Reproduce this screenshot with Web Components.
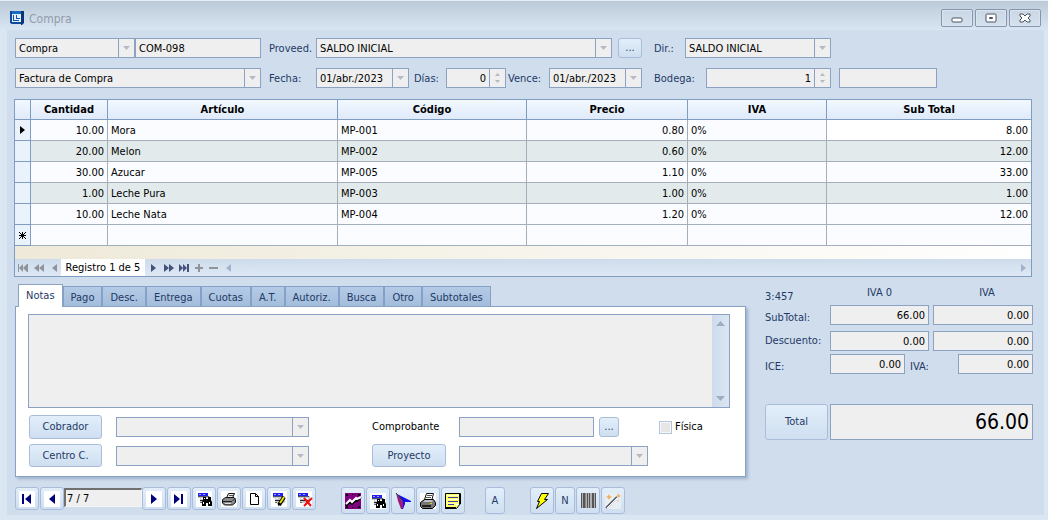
<!DOCTYPE html>
<html lang="es">
<head>
<meta charset="utf-8">
<title>Compra</title>
<style>
html, body { margin: 0; height: 100%; }
body {
  font: 11px/14px "DejaVu Sans Condensed", "DejaVu Sans", sans-serif;
  color: #1f3a66;
  --line: #8ba2c3;
  --field: #efefef;
  --face: #d0dded;
}
</style>
</head>
<body>
<purchase-window></purchase-window>
<script>
const BASE = `
  *, *::before, *::after { box-sizing: border-box; }
  :host([hidden]) { display: none; }
  input, select, textarea, button { font: inherit; margin: 0; border-radius: 0; }
  svg { display: block; flex: none; }
`;

function define(name, render) {
  customElements.define(name, class extends HTMLElement {
    connectedCallback() {
      if (this.shadowRoot) return;
      const t = document.createElement('template');
      t.innerHTML = render(this);
      this.attachShadow({ mode: 'open' }).append(t.content.cloneNode(true));
    }
  });
}

const svg = (w, h, body) => `<svg width="${w}" height="${h}" viewBox="0 0 ${w} ${h}" aria-hidden="true">${body}</svg>`;
const sheet = `<path fill="#fff" d="M1 1h16v16H1z"/>`;
const form = `<path fill="#c4c8d0" d="M3 6h12v7H5V8H3z"/><path fill="#2020f0" d="M3 3h10v3H3z"/><path fill="#a0a0e8" d="M4 4h2v1H4zM8 4h2v1H8z"/><path fill="#55556a" d="M3 6h11v1H3z"/><path fill="#fff" d="M6 8h2v1H6zM10 8h3v1h-3z"/><path fill="#222" d="M5 10h9v1H5z"/><path fill="#666" d="M5 12h2v1H5z"/>`;
const bino = `<path fill="#000" d="M8 7h3v2h2V7h3v3l1 2v4h-4v-3h-2v3H7v-4l1-2z"/><path fill="#fff" d="M9 8h1v1H9zM8 12h1v2H8zM14 12h1v2h-1z"/>`;
const ICONS = {
  first: svg(18, 18, sheet + `<path fill="#00007c" d="M4 4h2v10H4zM13 4v10L7 9z"/>`),
  prev: svg(18, 18, sheet + `<path fill="#00007c" d="M12 4v10L6 9z"/>`),
  next: svg(18, 18, sheet + `<path fill="#00007c" d="M6 4v10l6-5z"/>`),
  last: svg(18, 18, sheet + `<path fill="#00007c" d="M4 4v10l6-5zM11 4h2v10h-2z"/>`),
  find: svg(18, 18, sheet + form + bino),
  print: svg(18, 18, sheet + `<path fill="#eee" stroke="#111" d="M6.500 8l2-4.500h6l-2 4.500"/><path stroke="#555" d="M9 5.500h4M8 7.500h4"/><path fill="#8a8a8a" stroke="#111" d="M2.500 9.500l3-2h8.500l1.500 2v3l-3 2.500H4.500l-2-2z"/><path stroke="#222" d="M3 11.500h9M12.500 11l3-3"/><path fill="#ddd" d="M5 13h6v1H5z"/>`),
  page: svg(18, 18, sheet + `<path fill="#fff" stroke="#000" d="M5.500 3.500h5l3 3v8h-8zM10.500 3.500v3h3"/>`),
  edit: svg(18, 18, sheet + form + `<path stroke="#000" stroke-width="4" d="M9 15l5-8"/><path stroke="#e8e000" stroke-width="2" d="M10 13l4-6"/><path fill="#000" d="M8 16v-3l2 2z"/>`),
  remove: svg(18, 18, sheet + form + `<path stroke="#f01010" stroke-width="2" d="M9 8l7 8M17 8l-8 8"/>`),
  chart: svg(18, 18, `<path fill="#800080" d="M1 1h16v16H1z"/><path fill="#000" d="M2 2h2v2H2zM14 2h2v2h-2zM2 14h2v2H2zM14 14h2v2h-2zM8 2h1v1H8zM8 15h1v1H8z"/><path fill="none" stroke="#000" stroke-width="2" d="M2 14l4-4 2 2 4-4 1 1 4-4"/><path fill="none" stroke="#fff" stroke-width="2" d="M2 12l4-4 2 2 4-4 1 1 4-2"/>`),
  arrow: svg(18, 18, `<path fill="#a01878" d="M2 1l6 8v8H7L4 9z"/><path fill="#1010f0" d="M3 2l14 7v1h-6v2l-2 5H8V9z"/><path fill="#a01878" d="M8 9h1v7H8z"/><path fill="none" stroke="#333" d="M2 1l7 8"/>`),
  printer: svg(18, 18, sheet + `<path fill="#fff" stroke="#111" d="M5.500 7.500l2-6h7l-1.500 6"/><path stroke="#555" d="M8 3.500h5M7 5.500h5"/><path fill="#777" stroke="#000" d="M1.500 10.500l4-3h9l2 3v3l-3 3H3.500l-2-2z"/><path fill="#c0c0c0" d="M4 10h9l1-2H6z"/><path fill="#222" d="M3 13h9v2H3z"/><path fill="#d8d800" d="M11 11h2v1h-2z"/>`),
  note: svg(18, 18, `<path fill="#ffff66" stroke="#000" d="M1.500 1.500h15v10l-4 5h-11z"/><path fill="#ffffc8" d="M3 3h12v1H3zM3 7h12v1H3zM3 11h8v1H3z"/><path fill="#000" d="M1 15h11v2H1zM15 2h2v10h-2z"/><path fill="#fff" d="M12 12h3l-3 3z"/><path stroke="#3c3ca0" d="M4 5.500h10M4 9.500h10M4 12.500h6"/>`),
  bolt: svg(18, 18, `<path fill="#ffff00" stroke="#000" d="M8.500 1.500h7L11.500 7.500h3L3.500 16.500l3-7H4.500z"/>`),
  barcode: svg(18, 18, `<path fill="#b0b0b0" d="M2 1h15v15H2z"/><path fill="#555" d="M2 1h1v15H2zM4 1h2v15H4zM8 1h1v15H8zM10 1h1v15h-1zM13 1h2v15h-2zM16 1h1v15h-1z"/><path fill="#888" d="M6 1h1v15H6z"/>`),
  wand: svg(18, 18, `<path fill="#e9eef5" d="M1 1h16v16H1z"/><path stroke="#555a60" stroke-width="2" d="M2 16L13 5"/><path stroke="#fff" d="M3 16L14 5"/><path fill="#f0b060" d="M5 2l1 2 2 1-2 1-1 2-1-2-2-1 2-1zM14 1l1 2 2 1-2 1-1 1-1-2zM13 8l2 1-1 1z"/>`)
};

const down = svg(7, 4, `<path fill="#b4bac6" d="M0 0h7L3.500 4z"/>`);
const tinyUp = svg(5, 3, `<path fill="#b4b8c0" d="M0 3h5L2.500 0z"/>`);
const tinyDown = svg(5, 3, `<path fill="#b4b8c0" d="M0 0h5L2.500 3z"/>`);

/* Labelled field. kind: text | select | date | spin */
define('form-field', el => {
  const kind = el.getAttribute('kind') || 'text';
  const value = el.getAttribute('value') || '';
  const label = el.getAttribute('label');
  const name = el.getAttribute('name') || '';
  const aria = label ? '' : `aria-label="${name}"`;
  const control = kind === 'select'
    ? `<select id="c" ${aria}><option>${value}</option></select><span class="end">${down}</span>`
    : `<input id="c" type="text" ${aria} value="${value}" readonly>` +
      (kind === 'date' ? `<button class="end" type="button" aria-label="Abrir calendario">${down}</button>` : '') +
      (kind === 'spin' ? `<span class="end stack"><button type="button" aria-label="Subir">${tinyUp}</button><button type="button" aria-label="Bajar">${tinyDown}</button></span>` : '');
  return `<style>${BASE}
    :host { display: flex; align-items: center; min-width: 0; color: #1f3a66; }
    label { flex: none; width: var(--label-width, auto); padding-top: var(--label-drop, 2px); text-align: left; white-space: nowrap; }
    .box { flex: 1; min-width: 0; height: var(--box-height, 20px); display: flex; border: 1px solid var(--line); background: var(--field); }
    input, select { flex: 1; min-width: 0; width: 0; border: 0; outline: 0; padding: 0 3px; background: none; color: #000; appearance: none; text-align: inherit; height: 100%; }
    select { padding-top: 1px; }
    .end { flex: none; width: 16px; padding: 0; border: 0; border-left: 1px solid var(--line); background: none; display: flex; align-items: center; justify-content: center; pointer-events: none; }
    .stack { flex-direction: column; justify-content: space-evenly; }
    .stack button { border: 0; padding: 0; background: none; }
  </style>${label ? `<label for="c">${label}</label>` : ''}<div class="box">${control}</div>`;
});

define('push-button', el => {
  const icon = el.getAttribute('icon');
  const name = el.getAttribute('name');
  return `<style>${BASE}
    :host { display: flex; }
    button { flex: 1; min-width: 0; padding: 0; border: 1px solid #a9bcdb; border-radius: 3px; color: inherit;
      background: linear-gradient(#e2eefa, #cfdff0); display: flex; align-items: center; justify-content: center; }
  </style><button type="button" ${name ? `aria-label="${name}"` : ''}>${icon ? ICONS[icon] : '<slot></slot>'}</button>`;
});

define('title-bar', () => `<style>${BASE}
    :host { display: flex; align-items: center; height: 30px; padding: 4px 7px 0 9px; gap: 5px;
      border-top: 1px solid #e4edf5; background: linear-gradient(#bccad8, #d8e5f2); }
    h1 { flex: 1; margin: 0; font-size: 12px; line-height: 16px; font-weight: normal; color: #929caa; padding-top: 2px; }
    .keys { display: flex; gap: 2px; }
    button { width: 32px; height: 18px; padding: 0; border: 1px solid #8796ae; border-radius: 2px; background: linear-gradient(#c9d6e4, #d5e1ed);
      display: flex; align-items: center; justify-content: center; box-shadow: inset 0 0 0 1px #dbe5ef; }
  </style>
  ${svg(15, 15, `<path fill="#1a6cc0" d="M1 1h14v3H1z"/><path fill="#0a3478" d="M12 1h3v12l-2 2h-1z"/><path fill="#0d4a9c" d="M1 1h2v11h9v2H3l-2-1z"/><path fill="#e4eef8" d="M3 4h9v8H3z"/><path fill="#1459a8" d="M4 5h1v5h5v1H4zM7 5h1v3h3v1H7z"/>`)}
  <h1>Compra</h1>
  <div class="keys">
    <button type="button" aria-label="Minimizar">${svg(12, 10, '<rect x="1" y="5" width="10" height="4" rx="1" fill="#fff" stroke="#4b5566"/>')}</button>
    <button type="button" aria-label="Maximizar">${svg(12, 10, '<rect x="1" y="1" width="10" height="8" rx="1" fill="#fff" stroke="#4b5566"/><path fill="#c8d4e2" stroke="#4b5566" d="M4.500 4.500h3v1h-3z"/>')}</button>
    <button type="button" aria-label="Cerrar">${svg(12, 10, '<path fill="#fff" stroke="#4b5566" d="M1 1h3l2 2 2-2h3v2L9 5l2 2v2H8L6 7 4 9H1V7l2-2-2-2z"/>')}</button>
  </div>`);

define('purchase-header', () => `<style>${BASE}
    :host { display: grid; grid-template-columns: 246fr 373fr 382fr; gap: 10px 8px; padding: 8px 0 0 1px; }
    .g { display: flex; min-width: 0; align-items: center; }
    .c { padding-left: 4px; }
    .grow { flex: 1; }
    .type { flex: 120; } .num { flex: 126; }
    .lab { --label-width: 47px; }
    .more { width: 24px; height: 20px; margin-left: 6px; }
    .date { width: 140px; }
    .due { width: 134px; --label-width: 41px; margin-left: auto; }
    .days { width: 92px; --label-width: 32px; margin-left: 5px; text-align: right; }
    .dir { width: 177px; --label-width: 31px; }
    .store { width: 177px; --label-width: 52px; text-align: right; }
    .extra { width: 98px; margin-left: 8px; }
  </style>
  <div class="g"><form-field class="type" kind="select" value="Compra" name="Documento"></form-field><form-field class="num" value="COM-098" name="Número"></form-field></div>
  <div class="g"><form-field class="grow lab" kind="select" label="Proveed." value="SALDO INICIAL"></form-field><push-button class="more">...</push-button></div>
  <div class="g c"><form-field class="dir" kind="select" label="Dir.:" value="SALDO INICIAL"></form-field></div>
  <div class="g"><form-field class="grow" kind="select" value="Factura de Compra" name="Tipo"></form-field></div>
  <div class="g"><form-field class="date lab" kind="date" label="Fecha:" value="01/abr./2023"></form-field><form-field class="days" kind="spin" label="Días:" value="0"></form-field><form-field class="due" kind="date" label="Vence:" value="01/abr./2023"></form-field></div>
  <div class="g c"><form-field class="store" kind="spin" label="Bodega:" value="1"></form-field><form-field class="extra" name="Nombre de bodega"></form-field></div>`);

const ROWS = [
  ['10.00', 'Mora', 'MP-001', '0.80', '0%', '8.00'],
  ['20.00', 'Melon', 'MP-002', '0.60', '0%', '12.00'],
  ['30.00', 'Azucar', 'MP-005', '1.10', '0%', '33.00'],
  ['1.00', 'Leche Pura', 'MP-003', '1.00', '0%', '1.00'],
  ['10.00', 'Leche Nata', 'MP-004', '1.20', '0%', '12.00'],
  ['', '', '', '', '', '']
];
const marker = i => i === 0 ? svg(5, 8, '<path fill="#000" d="M0 0l5 4-5 4z"/>')
  : i === 5 ? svg(7, 7, '<path stroke="#000" d="M0 0l7 7M7 0L0 7M3.500 0v7M0 3.500h7"/>') : '';

define('detail-grid', () => `<style>${BASE}
    :host { display: block; border: 1px solid #7f9dc0; color: #000; }
    table { width: 100%; table-layout: fixed; border-collapse: separate; border-spacing: 0; }
    th, td { padding: 0 3px; border: 0 solid #a3b0bc; border-width: 0 1px 1px 0; overflow: hidden; white-space: nowrap; }
    th:last-child, td:last-child { border-right: 0; }
    thead th { height: 20px; border-color: #7f9dc0; background: linear-gradient(#f2f8fe, #dfeafa); font-weight: bold; }
    td, tbody th { height: 21px; background: #fafcff; }
    td { padding-top: 2px; }
    tbody tr:nth-child(even) td { background: #e2eaeb; }
    tbody tr:last-child td { background: #fafcff; }
    tbody tr:first-child td:last-child { background: #fff; }
    tbody th { background: #eaf2fc; border-color: #7f9dc0; }
    tbody th svg { margin: auto; }
    .r { text-align: right; }
    .filler { height: 13px; background: linear-gradient(90deg, #eee9d8, #fff); }
  </style>
  <table>
    <colgroup><col style="width:16px"><col style="width:77px"><col style="width:230px"><col style="width:189px"><col style="width:161px"><col style="width:139px"><col></colgroup>
    <thead><tr><th></th><th>Cantidad</th><th>Artículo</th><th>Código</th><th>Precio</th><th>IVA</th><th>Sub Total</th></tr></thead>
    <tbody>${ROWS.map((r, i) => `<tr><th>${marker(i)}</th>${r.map((c, k) => `<td${[0, 3, 5].includes(k) ? ' class="r"' : ''}>${c}</td>`).join('')}</tr>`).join('')}</tbody>
  </table>
  <div class="filler"></div>
  <record-nav></record-nav>`);

const L = 'l-5 4 5 4z', R = 'l5 4-5 4z';
const nav = (color, body, w = 10) => svg(w, 8, `<g fill="${color}">${body}</g>`);
define('record-nav', () => `<style>${BASE}
    :host { display: flex; height: 17px; background: linear-gradient(#cddbeb, #dee9f4); }
    .n { display: flex; align-items: center; }
    button { width: 15px; height: 17px; padding: 0; border: 0; background: none; display: flex; align-items: center; justify-content: center; }
    .n button:first-child { width: 16px; }
    output { width: 84px; padding-top: 2px; background: #fff; text-align: center; white-space: nowrap; }
    .bar { flex: 1; display: flex; justify-content: space-between; }
  </style>
  <div class="n">
    <button type="button" aria-label="Primero">${nav('#8f949c', `<path d="M0 0h1v8H0z"/><path d="M5 0l-4 4 4 4z"/><path d="M9 0l-4 4 4 4zM9 0h1v8H9z"/>`)}</button>
    <button type="button" aria-label="Página anterior">${nav('#8f949c', `<path d="M5 0${L}M10 0${L}"/>`)}</button>
    <button type="button" aria-label="Anterior">${nav('#8f949c', `<path d="M6 0${L}"/>`, 6)}</button>
  </div>
  <output>Registro 1 de 5</output>
  <div class="n">
    <button type="button" aria-label="Siguiente">${nav('#44527c', `<path d="M1 0${R}"/>`, 6)}</button>
    <button type="button" aria-label="Página siguiente">${nav('#44527c', `<path d="M0 0${R}M5 0${R}"/>`)}</button>
    <button type="button" aria-label="Último">${nav('#44527c', `<path d="M0 0l4 4-4 4zM4 0l4 4-4 4zM8 0h2v8H8z"/>`)}</button>
    <button type="button" aria-label="Agregar">${nav('#8f949c', `<path d="M0 3h3V0h2v3h3v2H5v3H3V5H0z"/>`, 8)}</button>
    <button type="button" aria-label="Eliminar">${nav('#8f949c', `<path d="M0 3h9v2H0z"/>`)}</button>
  </div>
  <div class="bar">
    <button type="button" aria-label="Desplazar a la izquierda">${nav('#a3b2cc', `<path d="M5 0${L}"/>`, 5)}</button>
    <button type="button" aria-label="Desplazar a la derecha">${nav('#a3b2cc', `<path d="M0 0${R}"/>`, 5)}</button>
  </div>`);

const TABS = ['Notas', 'Pago', 'Desc.', 'Entrega', 'Cuotas', 'A.T.', 'Autoriz.', 'Busca', 'Otro', 'Subtotales'];
define('tab-pages', () => `<style>${BASE}
    :host { display: block; }
    .tabs { display: flex; align-items: flex-end; padding-left: 3px; }
    button { flex: none; height: 20px; padding: 2px 7px 0; color: inherit; border: 1px solid #869fc8; border-bottom: 0; white-space: nowrap;
      background: linear-gradient(#b4cbe6, #a3bddb); }
    button[aria-selected=true] { height: 23px; margin-bottom: -1px; padding: 0 7px; background: #fff; border-color: #8ba2c3; position: relative; }
    .page { border: 1px solid #86a2c4; background: #fff; box-shadow: 2px 2px 3px #9db0ca; }
  </style>
  <div class="tabs" role="tablist">${TABS.map((t, i) => `<button type="button" role="tab" aria-selected="${i === 0}">${t}</button>`).join('')}</div>
  <div class="page" role="tabpanel"><slot></slot></div>`);

define('notes-page', () => `<style>${BASE}
    :host { display: block; padding: 7px 15px 9px 12px; }
    .memo { display: flex; height: 94px; border: 1px solid var(--line); }
    textarea { flex: 1; min-width: 0; border: 0; outline: 0; padding: 3px; resize: none; background: var(--field); color: #000; }
    .scroll { width: 17px; padding: 6px 0; display: flex; flex-direction: column; align-items: center; justify-content: space-between; background: linear-gradient(90deg, #cddbec, #dbe6f2); }
    .groups { display: flex; gap: 63px; padding: 7px 0 0 1px; }
    .g { display: grid; column-gap: 13px; row-gap: 5px; align-items: center; grid-template-rows: 24px 23px; }
    .left { grid-template-columns: 73px 193px; column-gap: 14px; }
    .right { grid-template-columns: 74px 1fr; flex: 1; }
    .g push-button { align-self: stretch; }
    .line { display: flex; align-items: center; }
    .voucher { width: 135px; }
    .line .more { width: 20px; height: 20px; margin-left: 5px; align-self: center; }
    .check { display: flex; align-items: center; gap: 3px; margin-left: 40px; color: #000; }
    .check input { appearance: none; width: 13px; height: 13px; border: 1px solid #b4c6de; background: #e6e6e6; box-shadow: inset 0 0 0 1px #f6f6f6; }
    .project { width: 189px; }
    .cap { color: #000; }
  </style>
  <div class="memo"><textarea aria-label="Notas"></textarea>
    <div class="scroll">${svg(9, 5, '<path fill="#9fadc4" d="M0 5h9L4.500 0z"/>')}${svg(9, 5, '<path fill="#9fadc4" d="M0 0h9L4.500 5z"/>')}</div></div>
  <div class="groups">
    <div class="g left">
      <push-button>Cobrador</push-button><form-field kind="select" name="Cobrador"></form-field>
      <push-button>Centro C.</push-button><form-field kind="select" name="Centro C."></form-field>
    </div>
    <div class="g right">
      <span class="cap">Comprobante</span>
      <div class="line"><form-field class="voucher" name="Comprobante"></form-field><push-button class="more">...</push-button>
        <label class="check"><input type="checkbox">Física</label></div>
      <push-button>Proyecto</push-button><form-field class="project" kind="select" name="Proyecto"></form-field>
    </div>
  </div>`);

define('totals-panel', () => `<style>${BASE}
    :host { display: block; text-align: right; margin-right: -1px; }
    .row { display: grid; grid-template-columns: 164px 1fr; column-gap: 4px; }
    .head { grid-template-columns: 65px 99px 1fr; column-gap: 0; text-align: center; height: 20px; padding-top: 2px; }
    .head span:first-child { text-align: left; padding-top: 4px; }
    .head span:last-child { padding-left: 12px; }
    .lab { --label-width: 65px; }
    .sub { margin-top: 1px; --label-drop: 6px; }
    .desc { margin-top: 6px; --label-drop: 0px; }
    .ice { margin-top: 3px; grid-template-columns: 140px 1fr; --label-drop: 6px; }
    .iva { --label-width: 48px; padding-left: 1px; }
    .total { display: grid; grid-template-columns: 63px 1fr; column-gap: 2px; margin-top: 30px; height: 36px; }
    .total form-field { font-size: 21px; line-height: 28px; --box-height: 36px; }
  </style>
  <div class="row head"><span>3:457</span><span>IVA 0</span><span>IVA</span></div>
  <div class="row sub"><form-field class="lab" label="SubTotal:" value="66.00"></form-field><form-field name="SubTotal IVA" value="0.00"></form-field></div>
  <div class="row desc"><form-field class="lab" label="Descuento:" value="0.00"></form-field><form-field name="Descuento IVA" value="0.00"></form-field></div>
  <div class="row ice"><form-field class="lab" label="ICE:" value="0.00"></form-field><form-field class="iva" label="IVA:" value="0.00"></form-field></div>
  <div class="total"><push-button>Total</push-button><form-field name="Total" value="66.00"></form-field></div>`);

define('command-bar', () => `<style>${BASE}
    :host { display: flex; align-items: flex-start; flex-wrap: wrap; gap: 2px 25px; padding: 10px 0 1px 1px; }
    div { display: flex; gap: 1px; }
    push-button { width: 24px; height: 23px; }
    .big push-button { height: 27px; }
    .big .a, .big .n { width: 20px; }
    .three { margin-left: -5px; }
    input { width: 78px; height: 19px; margin: 1px -1px 0; padding: 0 2px 0 1px; border: 1px solid #f4f4f4; border-top: 2px solid #707070; border-left: 2px solid #707070; background: var(--field); color: #000; outline: 0; }
  </style>
  <div><push-button icon="first" name="Primero"></push-button><push-button icon="prev" name="Anterior"></push-button>
    <input type="text" aria-label="Registro" value="7 / 7">
    <push-button icon="next" name="Siguiente"></push-button><push-button icon="last" name="Último"></push-button><push-button icon="find" name="Buscar"></push-button><push-button icon="print" name="Imprimir"></push-button><push-button icon="page" name="Nuevo"></push-button><push-button icon="edit" name="Editar"></push-button><push-button icon="remove" name="Eliminar"></push-button></div>
  <div class="big"><push-button icon="chart" name="Gráfico"></push-button><push-button icon="find" name="Consultar"></push-button><push-button icon="arrow" name="Ir a"></push-button><push-button icon="printer" name="Impresora"></push-button><push-button icon="note" name="Nota"></push-button></div>
  <div class="big three"><push-button class="a">A</push-button></div>
  <div class="big"><push-button icon="bolt" name="Procesar"></push-button><push-button class="n">N</push-button><push-button icon="barcode" name="Código de barras"></push-button><push-button icon="wand" name="Asistente"></push-button></div>`);

define('purchase-window', () => `<style>${BASE}
    :host { display: flex; flex-direction: column; min-height: 100vh; background: #dae6f2; }
    main { flex: 1; margin: 0 4px 5px 7px; padding: 0 12px 0 7px; background: var(--face); }
    detail-grid { margin-top: 11px; }
    .lower { display: grid; grid-template-columns: 1fr 267px; column-gap: 19px; padding: 7px 0 0 1px; }
  </style>
  <title-bar></title-bar>
  <main>
    <purchase-header></purchase-header>
    <detail-grid></detail-grid>
    <div class="lower"><tab-pages><notes-page></notes-page></tab-pages><totals-panel></totals-panel></div>
    <command-bar></command-bar>
  </main>`);
</script>
</body>
</html>
